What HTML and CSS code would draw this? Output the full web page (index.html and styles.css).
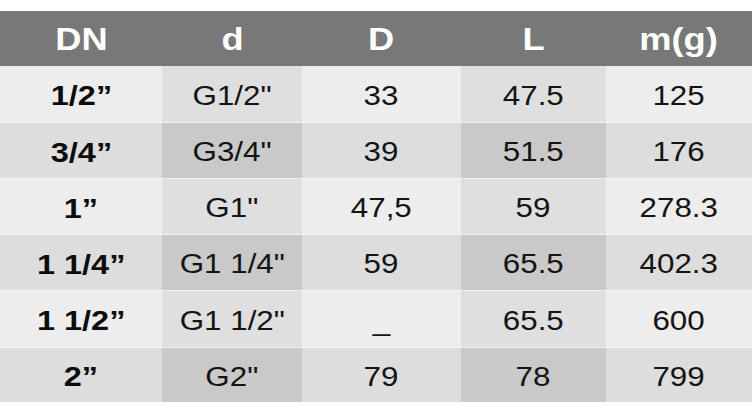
FILE: index.html
```html
<!DOCTYPE html>
<html>
<head>
<meta charset="utf-8">
<link rel="stylesheet" href="styles.css">
</head>
<body>
<table class="spec">
  <colgroup>
    <col class="c1"><col class="c2"><col class="c3"><col class="c4"><col class="c5">
  </colgroup>
  <thead>
    <tr class="head">
      <th><span class="t">DN</span></th>
      <th><span class="t">d</span></th>
      <th><span class="t">D</span></th>
      <th><span class="t">L</span></th>
      <th><span class="t">m(g)</span></th>
    </tr>
  </thead>
  <tbody>
    <tr class="light">
      <td class="dn"><span class="t">1/2”</span></td>
      <td class="alt"><span class="t">G1/2"</span></td>
      <td><span class="t">33</span></td>
      <td class="alt"><span class="t">47.5</span></td>
      <td><span class="t">125</span></td>
    </tr>
    <tr class="dark">
      <td class="dn"><span class="t">3/4”</span></td>
      <td class="alt"><span class="t">G3/4"</span></td>
      <td><span class="t">39</span></td>
      <td class="alt"><span class="t">51.5</span></td>
      <td><span class="t">176</span></td>
    </tr>
    <tr class="light">
      <td class="dn"><span class="t">1”</span></td>
      <td class="alt"><span class="t">G1"</span></td>
      <td><span class="t">47,5</span></td>
      <td class="alt"><span class="t">59</span></td>
      <td><span class="t">278.3</span></td>
    </tr>
    <tr class="dark">
      <td class="dn"><span class="t">1 1/4”</span></td>
      <td class="alt"><span class="t">G1 1/4"</span></td>
      <td><span class="t">59</span></td>
      <td class="alt"><span class="t">65.5</span></td>
      <td><span class="t">402.3</span></td>
    </tr>
    <tr class="light tall">
      <td class="dn"><span class="t">1 1/2”</span></td>
      <td class="alt"><span class="t">G1 1/2"</span></td>
      <td><span class="t">_</span></td>
      <td class="alt"><span class="t">65.5</span></td>
      <td><span class="t">600</span></td>
    </tr>
    <tr class="dark short">
      <td class="dn"><span class="t">2”</span></td>
      <td class="alt"><span class="t">G2"</span></td>
      <td><span class="t">79</span></td>
      <td class="alt"><span class="t">78</span></td>
      <td><span class="t">799</span></td>
    </tr>
  </tbody>
</table>
</body>
</html>
```
FILE: styles.css
```css
html, body {
  margin: 0;
  padding: 0;
  background: #ffffff;
}
body {
  padding-top: 11px;
  font-family: "Liberation Sans", Arial, sans-serif;
}
.spec {
  border-collapse: collapse;
  table-layout: fixed;
  width: 752px;
}
.c1 { width: 162px; }
.c2 { width: 140px; }
.c3 { width: 159px; }
.c4 { width: 145px; }
.c5 { width: 146px; }

.spec th, .spec td {
  padding: 0;
  text-align: center;
  vertical-align: middle;
  white-space: nowrap;
}
.t {
  display: inline-block;
  transform: scaleX(1.16);
}
.head th {
  height: 55px;
  background: #787878;
  color: #ffffff;
  font-size: 31px;
  font-weight: bold;
}
.head th .t { transform: scaleX(1.17) translateY(1px); }

.spec td {
  height: 56px;
  box-sizing: border-box;
  padding-top: 5px;
  font-size: 27px;
  color: #141414;
  border-top: 1px solid #f3f3f3;
}
.spec tbody tr:first-child td { border-top: none; }
.spec td.dn { font-weight: bold; color: #0c0c0c; font-size: 28px; }
.tall td { height: 57px; }
.short td { height: 55px; }

.light td { background: #ededed; }
.light td.alt { background: #dfdfdf; }
.dark td { background: #dddddd; }
.dark td.alt { background: #c9c9c9; }
```
